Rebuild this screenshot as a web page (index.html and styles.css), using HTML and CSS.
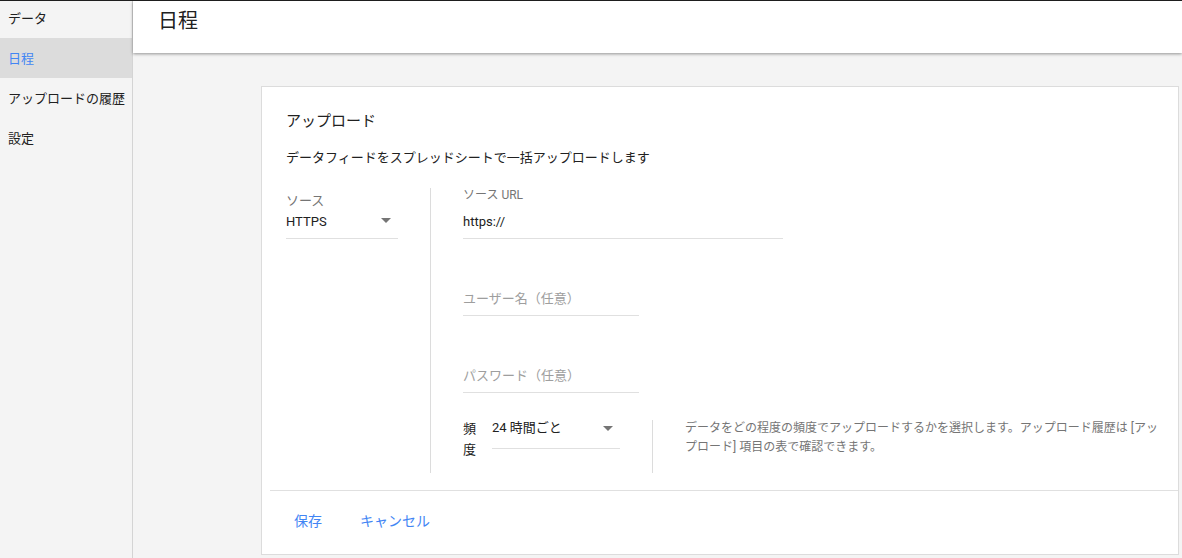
FILE: index.html
```html
<!DOCTYPE html>
<html lang="ja">
<head>
<meta charset="utf-8">
<title>日程</title>
<link rel="stylesheet" href="styles.css">
</head>
<body>
<div class="app">
  <aside class="sidebar">
    <ul class="nav">
      <li class="nav-item">データ</li>
      <li class="nav-item active">日程</li>
      <li class="nav-item">アップロードの履歴</li>
      <li class="nav-item">設定</li>
    </ul>
  </aside>
  <main class="main">
    <header class="header"><h1 class="page-title">日程</h1></header>
    <section class="card">
      <div class="card-body">
        <h2 class="card-title">アップロード</h2>
        <p class="card-desc">データフィードをスプレッドシートで一括アップロードします</p>
        <div class="form">
          <div class="col-left">
            <div class="big-label">ソース</div>
            <div class="select select-source">
              <span>HTTPS</span>
              <span class="caret"></span>
            </div>
          </div>
          <div class="col-right">
            <div class="field">
              <div class="small-label">ソース URL</div>
              <div class="input input-url">https://</div>
            </div>
            <div class="field">
              <div class="small-label"></div>
              <div class="input input-short placeholder">ユーザー名（任意）</div>
            </div>
            <div class="field">
              <div class="small-label"></div>
              <div class="input input-short placeholder">パスワード（任意）</div>
            </div>
            <div class="freq-row">
              <div class="freq-label">頻度</div>
              <div class="select select-freq">
                <span>24 時間ごと</span>
                <span class="caret"></span>
              </div>
              <div class="help">
                <p class="help-text">データをどの程度の頻度でアップロードするかを選択します。アップロード履歴は [アップロード] 項目の表で確認できます。</p>
              </div>
            </div>
          </div>
        </div>
      </div>
      <div class="card-footer">
        <button class="btn">保存</button>
        <button class="btn btn-cancel">キャンセル</button>
      </div>
    </section>
  </main>
</div>
</body>
</html>
```
FILE: styles.css
```css
* { box-sizing: border-box; }
html, body { margin: 0; padding: 0; }
body {
  font-family: Roboto, "Noto Sans CJK JP", sans-serif;
  color: #212121;
  background: #f4f4f4;
  border-top: 1px solid #1e1e1e;
  height: 558px;
  overflow: hidden;
}
.app {
  display: flex;
  height: 557px;
}
.sidebar {
  width: 133px;
  flex: 0 0 133px;
  background: #f4f4f4;
  border-right: 1px solid #d4d4d4;
}
.nav {
  list-style: none;
  margin: -3px 0 0 0;
  padding: 0;
}
.nav-item {
  height: 40px;
  line-height: 41px;
  padding-left: 8px;
  font-size: 13px;
  color: #212121;
  white-space: nowrap;
}
.nav-item.active {
  background: #dcdcdc;
  color: #4285f4;
}
.main {
  flex: 1;
  display: flex;
  flex-direction: column;
  background: #f4f4f4;
  min-width: 0;
}
.header {
  height: 52px;
  background: #fff;
  box-shadow: 0 1px 3px rgba(0,0,0,0.4);
  padding-left: 25px;
  position: relative;
  z-index: 1;
}
.page-title {
  margin: 0;
  font-size: 20px;
  font-weight: 400;
  line-height: 41px;
}
.card {
  margin: 33px 3px 0 128px;
  background: #fff;
  border: 1px solid #dcdcdc;
}
.card-body {
  padding: 24px 14px 0 24px;
}
.card-title {
  margin: 0;
  font-size: 15px;
  font-weight: 400;
  line-height: 20px;
}
.card-desc {
  margin: 17px 0 0;
  font-size: 13px;
  line-height: 20px;
}
.form {
  margin-top: 20px;
  display: flex;
}
.col-left {
  width: 112px;
  flex: 0 0 112px;
  margin-right: 32px;
}
.big-label {
  height: 25px;
  line-height: 26px;
  font-size: 13px;
  color: #757575;
}
.select {
  position: relative;
  font-size: 13px;
  line-height: 16px;
  padding-top: 1px;
  padding-bottom: 8px;
  border-bottom: 1px solid #e0e0e0;
}
.caret {
  position: absolute;
  right: 7px;
  top: 5px;
  width: 0;
  height: 0;
  border-left: 5px solid transparent;
  border-right: 5px solid transparent;
  border-top: 5px solid #757575;
}
.col-right {
  flex: 1;
  border-left: 1px solid #dcdcdc;
  padding-left: 32px;
  min-width: 0;
}
.field {
  margin-bottom: 26px;
}
.small-label {
  height: 25px;
  font-size: 12px;
  line-height: 15px;
  color: #757575;
}
.input {
  font-size: 13px;
  line-height: 16px;
  padding-top: 1px;
  padding-bottom: 8px;
  border-bottom: 1px solid #e0e0e0;
}
.input-url { width: 320px; }
.input-short { width: 176px; }
.placeholder { color: #9e9e9e; }
.freq-row {
  display: flex;
  align-items: flex-start;
  margin-top: -1px;
  height: 55px;
}
.freq-label {
  width: 16px;
  margin-right: 13px;
  font-size: 13px;
  line-height: 21px;
}
.select-freq {
  width: 128px;
  line-height: 20px;
  padding-top: 0;
  padding-bottom: 10px;
}
.select-freq .caret { top: 8px; }
.help {
  flex: 1;
  margin-left: 32px;
  margin-top: 2px;
  height: 53px;
  border-left: 1px solid #dcdcdc;
  padding-left: 32px;
}
.help-text {
  margin: -1px 0 0;
  font-size: 12px;
  line-height: 19px;
  color: #757575;
}
.card-footer {
  margin: 17px 0 0 8px;
  border-top: 1px solid #e0e0e0;
  padding: 20px 0 23px 8px;
  display: flex;
}
.btn {
  font-family: Roboto, "Noto Sans CJK JP", sans-serif;
  background: none;
  border: none;
  padding: 0 16px;
  margin: 0;
  font-size: 14px;
  line-height: 20px;
  color: #4285f4;
  cursor: pointer;
}
.btn-cancel { margin-left: 6px; }
```
